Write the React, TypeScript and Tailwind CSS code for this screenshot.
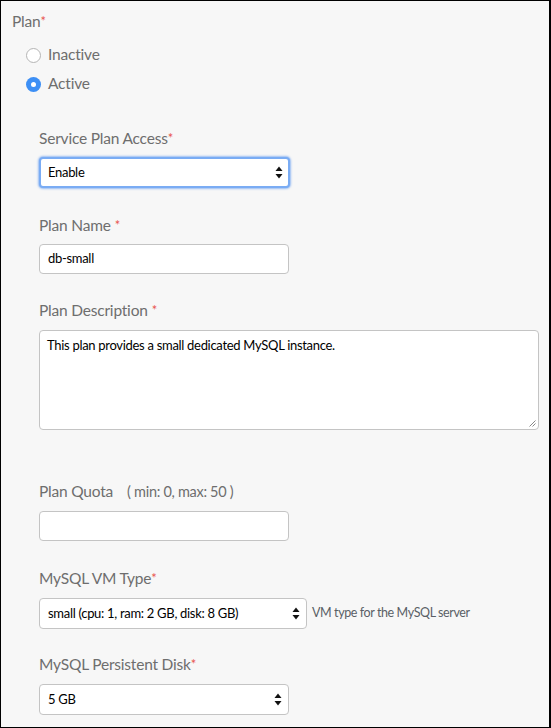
import React from "react";

const font = { fontFamily: "Lato, 'Open Sans', sans-serif" };

function Star({ space = false }: { space?: boolean }) {
  return <span className={`text-[#e8554e] text-[13px] align-top ${space ? "ml-[4px]" : ""}`}>*</span>;
}

function Label({ children }: { children: React.ReactNode }) {
  return <div className="text-[15.5px] leading-[20px] text-[#6e6e6e] tracking-[-0.2px]">{children}</div>;
}

function Arrows() {
  return (
    <svg width="8" height="13" viewBox="0 0 8 13" className="shrink-0">
      <path d="M4 0.5 L7.5 5 L0.5 5 Z" fill="#111" />
      <path d="M4 12.5 L7.5 8 L0.5 8 Z" fill="#111" />
    </svg>
  );
}

function Select({ value, w, focus = false }: { value: string; w: string; focus?: boolean }) {
  return (
    <div
      className={`${w} h-[31px] bg-white rounded-[4px] flex items-center justify-between text-[13px] tracking-[-0.3px] text-black ${
        focus
          ? "border-2 border-[#7aacf4] shadow-[0_0_2px_1px_rgba(90,150,240,0.6)] pl-[7px] pr-[5px]"
          : "border border-[#c4c4c4] pl-[8px] pr-[6px]"
      }`}
    >
      <span>{value}</span>
      <Arrows />
    </div>
  );
}

export default function App() {
  return (
    <div style={font} className="w-[551px] h-[728px] bg-[#f7f7f7] border border-black border-r-2 overflow-hidden">
      <div className="pl-[11px] pt-[10px]">
        <Label>
          Plan<Star />
        </Label>
        <div className="pl-[14px] mt-[14px] flex flex-col gap-[9px] text-[15.5px] tracking-[-0.2px] text-[#6e6e6e]">
          <div className="flex items-center h-[20px]">
            <span className="w-[15px] h-[15px] rounded-full border border-[#b5b5b5] bg-white shrink-0" />
            <span className="ml-[7px]">Inactive</span>
          </div>
          <div className="flex items-center h-[20px]">
            <span className="w-[15px] h-[15px] rounded-full bg-[#3d8ff5] flex items-center justify-center shrink-0">
              <span className="w-[5px] h-[5px] rounded-full bg-white" />
            </span>
            <span className="ml-[7px]">Active</span>
          </div>
        </div>
      </div>

      <div className="pl-[38px] mt-[34px]">
        <Label>
          Service Plan Access<Star />
        </Label>
        <div className="mt-[9px]">
          <Select value="Enable" w="w-[251px]" focus />
        </div>

        <div className="mt-[27px]">
          <Label>
            Plan Name<Star space />
          </Label>
        </div>
        <div className="mt-[9px] w-[250px] h-[30px] bg-white border border-[#c4c4c4] rounded-[4px] flex items-center pl-[8px] text-[13px] tracking-[-0.3px] text-black">
          db-small
        </div>

        <div className="mt-[26px]">
          <Label>
            Plan Description<Star space />
          </Label>
        </div>
        <div className="relative mt-[10px] w-[500px] h-[100px] bg-white border border-[#c4c4c4] rounded-[4px] pl-[7px] pt-[5px] text-[13px] tracking-[-0.3px] text-black">
          This plan provides a small dedicated MySQL instance.
          <svg width="7" height="7" viewBox="0 0 7 7" className="absolute right-[2px] bottom-[2px]">
            <path d="M6.5 0.5 L0.5 6.5 M6.5 3.5 L3.5 6.5" stroke="#888" strokeWidth="1" />
          </svg>
        </div>

        <div className="mt-[51px]">
          <Label>
            Plan Quota<span className="ml-[14px] text-[14.5px] tracking-[-0.3px]">( min: 0, max: 50 )</span>
          </Label>
        </div>
        <div className="mt-[9px] w-[250px] h-[30px] bg-white border border-[#c4c4c4] rounded-[4px]" />

        <div className="mt-[27px]">
          <Label>
            MySQL VM Type<Star />
          </Label>
        </div>
        <div className="mt-[10px] flex items-center">
          <Select value="small (cpu: 1, ram: 2 GB, disk: 8 GB)" w="w-[268px]" />
          <span className="ml-[5px] text-[12.5px] tracking-[-0.4px] text-[#5a5f66]">VM type for the MySQL server</span>
        </div>

        <div className="mt-[25px]">
          <Label>
            MySQL Persistent Disk<Star />
          </Label>
        </div>
        <div className="mt-[10px]">
          <Select value="5 GB" w="w-[250px]" />
        </div>
      </div>
    </div>
  );
}
